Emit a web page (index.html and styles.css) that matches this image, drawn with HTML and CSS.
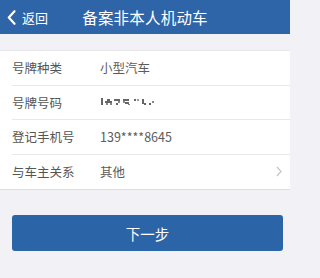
FILE: index.html
```html
<!DOCTYPE html>
<html lang="zh">
<head>
<meta charset="utf-8">
<link rel="stylesheet" href="styles.css">
</head>
<body>
<header class="nav">
  <div class="back">
    <svg class="chev" width="9" height="15" viewBox="0 0 9 15"><path d="M7.5 1.2 L1.8 7.5 L7.5 13.8" fill="none" stroke="#fff" stroke-width="2.2" stroke-linecap="round" stroke-linejoin="round"/></svg>
    <span>返回</span>
  </div>
  <h1 class="title">备案非本人机动车</h1>
</header>
<div class="gap"></div>
<ul class="list">
  <li class="row"><span class="label">号牌种类</span><span class="value">小型汽车</span></li>
  <li class="row"><span class="label">号牌号码</span><span class="value">
    <svg class="plate" width="68" height="10" viewBox="0 0 68 10">
      <g fill="#666">
        <rect x="1" y="1" width="2" height="7"/>
        <rect x="5" y="4" width="7" height="2"/><rect x="7" y="2" width="3" height="2"/><rect x="6" y="6" width="2" height="2" fill="#888"/><rect x="10" y="6" width="2" height="2" fill="#888"/>
        <rect x="14" y="2" width="6" height="2"/><rect x="18" y="4" width="2" height="2" fill="#888"/><rect x="16" y="6" width="2" height="2"/>
        <rect x="23" y="2" width="6" height="2"/><rect x="23" y="4" width="2" height="2" fill="#888"/><rect x="25" y="5" width="4" height="2"/><rect x="28" y="7" width="2" height="1" fill="#888"/>
        <rect x="34" y="2" width="2" height="2"/><rect x="37" y="2" width="2" height="2" fill="#999"/>
        <rect x="42" y="2" width="2" height="5"/><rect x="44" y="6" width="2" height="2"/>
        <rect x="49" y="6" width="2" height="2"/><rect x="52" y="4" width="2" height="2" fill="#888"/>
      </g>
    </svg>
  </span></li>
  <li class="row"><span class="label">登记手机号</span><span class="value">139****8645</span></li>
  <li class="row"><span class="label">与车主关系</span><span class="value">其他</span>
    <svg class="arrow" width="6" height="11" viewBox="0 0 6 11"><path d="M1 1 L5 5.5 L1 10" fill="none" stroke="#c4c4c8" stroke-width="1.2"/></svg>
  </li>
</ul>
<div class="actions">
  <button class="next">下一步</button>
</div>
</body>
</html>
```

FILE: styles.css
```css
* { box-sizing: border-box; }
html, body {
  margin: 0;
  padding: 0;
  background: #f2f2f6;
  font-family: "Noto Sans CJK SC", "Noto Sans", sans-serif;
  width: 290px;
  height: 278px;
  overflow: hidden;
}
.nav {
  position: relative;
  height: 34px;
  background: #2e64a8;
  color: #fff;
  display: flex;
  align-items: center;
  justify-content: center;
}
.back {
  position: absolute;
  left: 7px;
  top: 0;
  height: 34px;
  display: flex;
  align-items: center;
  gap: 6px;
  font-size: 13px;
}
.chev { display: block; }
.title {
  margin: 0;
  font-size: 15.5px;
  font-weight: 400;
  letter-spacing: 0.2px;
}
.gap { height: 16px; }
.list {
  list-style: none;
  margin: 0;
  padding: 0 0 0 12px;
  background: #fff;
  border-top: 1px solid #e6e6ea;
  border-bottom: 1px solid #dedee2;
}
.row {
  height: 34.5px;
  display: flex;
  align-items: center;
  border-bottom: 1px solid #e8e8ec;
  padding-right: 8px;
}
.row:last-child { border-bottom: none; }
.label {
  width: 88px;
  font-size: 12.5px;
  color: #555;
}
.value {
  flex: 1;
  font-size: 12.5px;
  color: #5c5c5c;
  display: flex;
  align-items: center;
}
.plate { display: block; }
.arrow { display: block; }
.actions {
  padding: 25px 7px 0 12px;
}
.next {
  display: block;
  width: 100%;
  height: 36px;
  border: none;
  border-radius: 3px;
  background: #2c64a8;
  color: #fff;
  font-family: "Noto Sans CJK SC", "Noto Sans", sans-serif;
  font-size: 14.5px;
  padding: 0;
}
```
